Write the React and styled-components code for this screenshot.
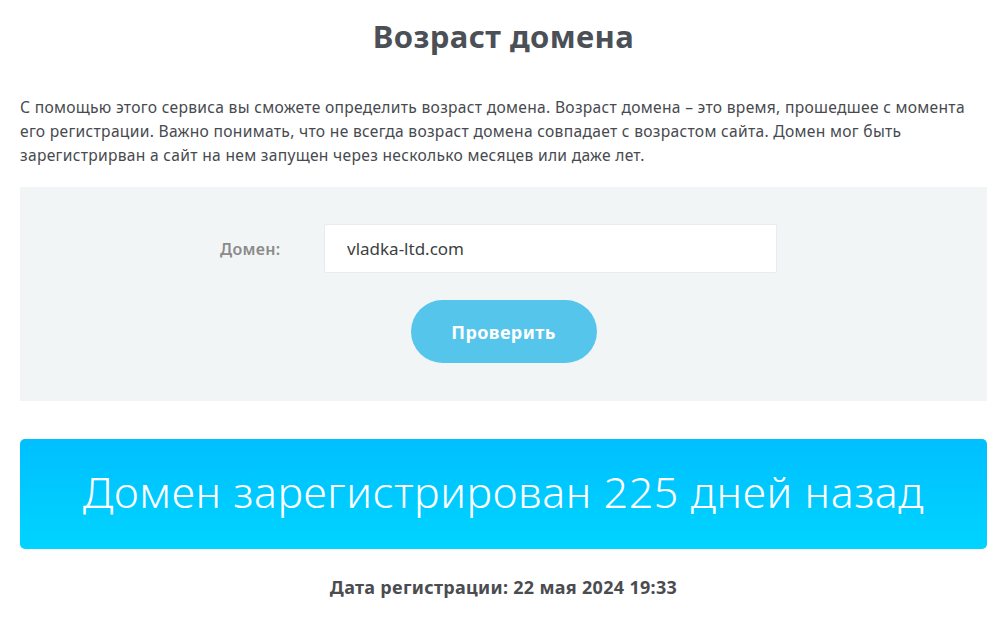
import React from 'react';
import styled, { createGlobalStyle } from 'styled-components';

const GlobalStyle = createGlobalStyle`
  body {
    margin: 0;
    background: #ffffff;
    font-family: "Noto Sans", "Open Sans", sans-serif;
    color: #444;
  }
`;

function App() {
  return (
    <Page>
      <GlobalStyle />
      <Title>Возраст домена</Title>
      <Intro>
        С помощью этого сервиса вы сможете определить возраст домена. Возраст домена – это время, прошедшее с момента
        <br />
        его регистрации. Важно понимать, что не всегда возраст домена совпадает с возрастом сайта. Домен мог быть
        <br />
        зарегистрирван а сайт на нем запущен через несколько месяцев или даже лет.
      </Intro>
      <FormPanel>
        <FieldRow>
          <Label>Домен:</Label>
          <Input defaultValue="vladka-ltd.com" />
        </FieldRow>
        <CheckButton>Проверить</CheckButton>
      </FormPanel>
      <Result>Домен зарегистрирован 225 дней назад</Result>
      <RegDate>Дата регистрации: 22 мая 2024 19:33</RegDate>
    </Page>
  );
}

export default App;

const Page = styled.div`
  padding: 0 16px 0 20px;
  display: flex;
  flex-direction: column;
`;

const Title = styled.h1`
  margin: 17px 0 0;
  text-align: center;
  font-size: 31px;
  line-height: 38px;
  font-weight: 700;
  letter-spacing: 0.4px;
  color: #4b5056;
`;

const Intro = styled.p`
  margin: 40px 0 0;
  font-size: 15.6px;
  line-height: 24px;
  letter-spacing: 0.3px;
  color: #474a4f;
  white-space: nowrap;
`;

const FormPanel = styled.div`
  margin-top: 20px;
  height: 214px;
  box-sizing: border-box;
  background: #f2f5f6;
  padding-top: 37px;
  display: flex;
  flex-direction: column;
  align-items: center;
`;

const FieldRow = styled.div`
  display: flex;
  align-items: center;
  margin-right: 10px;
`;

const Label = styled.label`
  width: 104px;
  font-size: 16px;
  font-weight: 600;
  letter-spacing: 0.3px;
  color: #8b8b8b;
`;

const Input = styled.input`
  width: 453px;
  height: 49px;
  box-sizing: border-box;
  border: 1px solid #e8ecee;
  border-radius: 2px;
  background: #fff;
  padding: 0 22px;
  font-family: "Noto Sans", sans-serif;
  font-size: 17px;
  color: #3d3f42;
  outline: none;
`;

const CheckButton = styled.button`
  margin-top: 27px;
  width: 186px;
  height: 63px;
  border: none;
  border-radius: 32px;
  background: #56c5ec;
  color: #fff;
  font-family: "Noto Sans", sans-serif;
  font-size: 18px;
  font-weight: 700;
  letter-spacing: 0.4px;
  cursor: pointer;
`;

const Result = styled.div`
  margin-top: 38px;
  height: 110px;
  padding-bottom: 6px;
  box-sizing: border-box;
  border-radius: 5px;
  background: linear-gradient(180deg, #00bfff 0%, #00d4ff 100%);
  display: flex;
  align-items: center;
  justify-content: center;
  color: #fff;
  font-size: 43px;
  font-weight: 300;
  letter-spacing: 0.6px;
`;

const RegDate = styled.div`
  margin-top: 26px;
  text-align: center;
  font-size: 18px;
  font-weight: 700;
  letter-spacing: 0.3px;
  color: #4a4c50;
`;
